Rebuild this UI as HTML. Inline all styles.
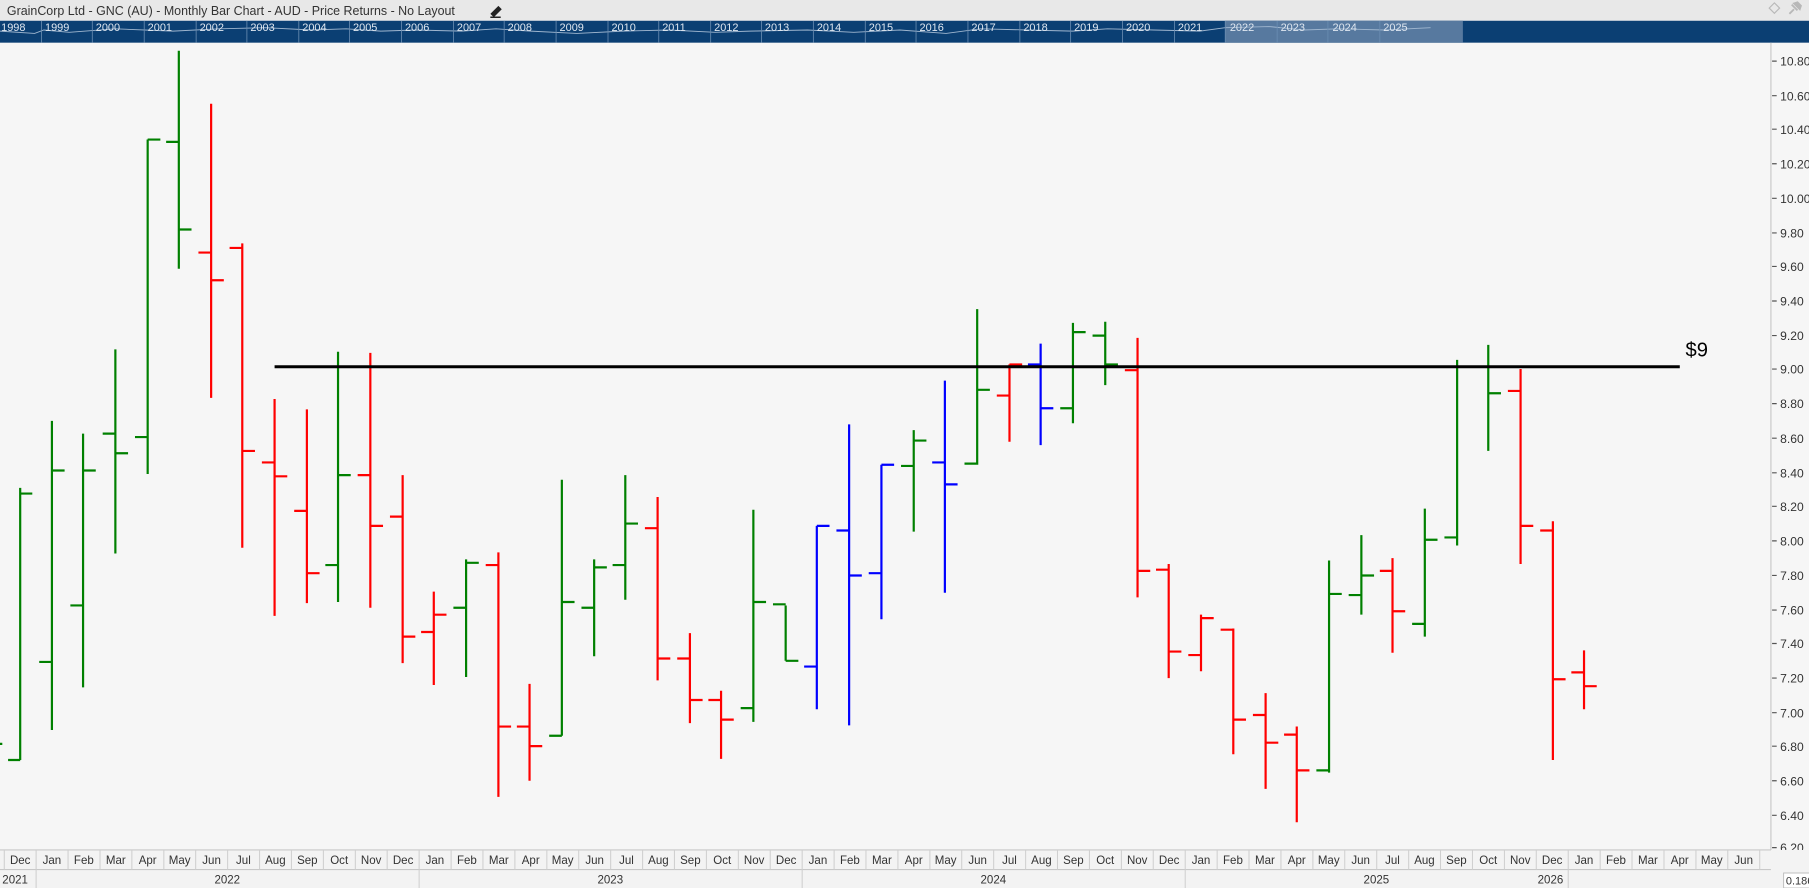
<!DOCTYPE html>
<html><head><meta charset="utf-8"><style>
html,body{margin:0;padding:0;background:#f6f6f6;overflow:hidden}
svg{display:block}
text{font-family:"Liberation Sans",sans-serif}
</style></head><body>
<svg width="1809" height="888" viewBox="0 0 1568 770" preserveAspectRatio="none" xmlns="http://www.w3.org/2000/svg">
<rect x="0" y="0" width="1568" height="770" fill="#f6f6f6"/>
<rect x="0" y="0" width="1568" height="18" fill="#e8e8e8"/>
<text x="6" y="13" font-size="10.8" fill="#333">GrainCorp Ltd - GNC (AU) - Monthly Bar Chart - AUD - Price Returns - No Layout</text>
<path d="M426,12 l6,-6 l2,2 l-6,6 z M425,15 h9" stroke="#222" stroke-width="1.3" fill="#222"/>
<path d="M1538,2.5 l4.5,4.5 l-4.5,4.5 l-4.5,-4.5 z" fill="none" stroke="#b8b8b8" stroke-width="1"/>
<path d="M1551,12 l4,-4 M1553,4 l5,5 M1555,3 l3,-1 l3,3 l-1,3 z" stroke="#b8b8b8" stroke-width="1.6" fill="#b8b8b8"/>
<rect x="0" y="18" width="1568" height="19" fill="#0b3f73"/>
<rect x="1062" y="18" width="206" height="19" fill="#57799f"/>
<polyline points="0,27 30,29 38,26 60,28 100,25 150,27 190,25 230,24 270,26 300,25 330,27 360,26 400,27 430,25 460,27 500,29 540,27 580,26 620,28 650,27 700,26 740,28 780,26 820,29 850,25 890,26 930,27 960,25 1000,26 1040,27 1062,24 1100,23 1130,26 1160,25 1200,26 1240,24" fill="none" stroke="#9fb6cf" stroke-width="0.8"/>
<g stroke="#6a8db2" stroke-width="0.7">
<path d="M36,18v19M80,18v19M125,18v19M170,18v19M214,18v19M259,18v19M303,18v19M348,18v19M393,18v19M437,18v19M482,18v19M527,18v19M571,18v19M616,18v19M660,18v19M705,18v19M750,18v19M794,18v19M839,18v19M884,18v19M928,18v19M973,18v19M1018,18v19M1062,18v19M1107,18v19M1151,18v19M1196,18v19"/>
</g>
<g font-size="9.5" fill="#dfe7f0">
<text x="1" y="27">1998</text><text x="39" y="27">1999</text><text x="83" y="27">2000</text><text x="128" y="27">2001</text><text x="173" y="27">2002</text><text x="217" y="27">2003</text><text x="262" y="27">2004</text><text x="306" y="27">2005</text><text x="351" y="27">2006</text><text x="396" y="27">2007</text><text x="440" y="27">2008</text><text x="485" y="27">2009</text><text x="530" y="27">2010</text><text x="574" y="27">2011</text><text x="619" y="27">2012</text><text x="663" y="27">2013</text><text x="708" y="27">2014</text><text x="753" y="27">2015</text><text x="797" y="27">2016</text><text x="842" y="27">2017</text><text x="887" y="27">2018</text><text x="931" y="27">2019</text><text x="976" y="27">2020</text><text x="1021" y="27">2021</text><text x="1066" y="27">2022</text><text x="1110" y="27">2023</text><text x="1155" y="27">2024</text><text x="1199" y="27">2025</text>
</g>
<line x1="1535" y1="37" x2="1535" y2="737" stroke="#c8c8c8" stroke-width="1"/>
<g font-size="10.5" fill="#333">
<text x="1543" y="57">10.80</text><text x="1543" y="87">10.60</text><text x="1543" y="116">10.40</text><text x="1543" y="146">10.20</text><text x="1543" y="176">10.00</text><text x="1543" y="206">9.80</text><text x="1543" y="235">9.60</text><text x="1543" y="265">9.40</text><text x="1543" y="295">9.20</text><text x="1543" y="324">9.00</text><text x="1543" y="354">8.80</text><text x="1543" y="384">8.60</text><text x="1543" y="414">8.40</text><text x="1543" y="443">8.20</text><text x="1543" y="473">8.00</text><text x="1543" y="503">7.80</text><text x="1543" y="533">7.60</text><text x="1543" y="562">7.40</text><text x="1543" y="592">7.20</text><text x="1543" y="622">7.00</text><text x="1543" y="651">6.80</text><text x="1543" y="681">6.60</text><text x="1543" y="711">6.40</text><text x="1543" y="739">6.20</text>
</g>
<g stroke="#555" stroke-width="1">
<path d="M1536,53h4M1536,83h4M1536,112h4M1536,142h4M1536,172h4M1536,202h4M1536,231h4M1536,261h4M1536,291h4M1536,320h4M1536,350h4M1536,380h4M1536,410h4M1536,439h4M1536,469h4M1536,499h4M1536,529h4M1536,558h4M1536,588h4M1536,618h4M1536,647h4M1536,677h4M1536,707h4M1536,735h4"/>
</g>
<g stroke-width="1.9" fill="none">
<path stroke="#008000" d="M0,645h2M17.5,423V659M7,659H17.5M17.5,428H28M45,365V633M34,574H45M45,408H56M72,376V596M61,525H72M72,408H83M100,303V480M89,376H100M100,393H111M128,121V411M117,379H128M128,121H139M155,44V233M144,123H155M155,199H166M293,305V522M282,490H293M293,412H304M404,485V587M393,527H404M404,488H415M487,416V638M476,638H487M487,522H498M515,485V569M504,527H515M515,492H526M542,412V520M531,490H542M542,454H553M653,442V626M642,614H653M653,522H664M681,525V573M670,524H681M681,573H692M792,373V461M781,404H792M792,382H803M847,268V403M836,402H847M847,338H858M930,280V367M919,354H930M930,288H941M958,279V334M947,291H958M958,316H969M1152,486V670M1141,668H1152M1152,515H1163M1180,464V533M1169,516H1180M1180,499H1191M1235,441V552M1224,541H1235M1235,468H1246M1263,312V473M1252,466H1263M1263,318H1274M1290,299V391M1279,318H1290M1290,341H1301"/>
<path stroke="#ff0000" d="M183,90V345M172,219H183M183,243H194M210,211V475M199,215H210M210,391H221M238,346V534M227,401H238M238,413H249M266,355V523M255,443H266M266,497H277M321,306V527M310,412H321M321,456H332M349,412V575M338,448H349M349,552H360M376,513V594M365,548H376M376,533H387M432,479V691M421,490H432M432,630H443M459,593V677M448,630H459M459,647H470M570,431V590M559,458H570M570,571H581M598,549V627M587,571H598M598,607H609M625,599V658M614,607H625M625,624H636M875,316V383M864,343H875M875,316H886M986,293V518M975,321H986M986,495H997M1013,489V588M1002,494H1013M1013,565H1024M1041,533V582M1030,568H1041M1041,536H1052M1069,545V654M1058,546H1069M1069,624H1080M1097,601V684M1086,620H1097M1097,644H1108M1124,630V713M1113,637H1124M1124,668H1135M1207,484V566M1196,495H1207M1207,530H1218M1318,320V489M1307,339H1318M1318,456H1329M1346,452V659M1335,460H1346M1346,589H1357M1373,564V615M1362,583H1373M1373,595H1384"/>
<path stroke="#0000ff" d="M708,456V615M697,578H708M708,456H719M736,368V629M725,460H736M736,499H747M764,403V537M753,497H764M764,403H775M819,330V514M808,401H819M819,420H830M902,298V386M891,316H902M902,354H913"/>
</g>
<line x1="238" y1="318" x2="1456" y2="318" stroke="#000" stroke-width="2.6"/>
<text x="1461" y="309" font-size="17.5" fill="#000">$9</text>
<rect x="0" y="737" width="1568" height="33" fill="#f3f3f3"/>
<line x1="0" y1="737" x2="1535" y2="737" stroke="#c8c8c8" stroke-width="1"/>
<line x1="0" y1="754" x2="1535" y2="754" stroke="#c8c8c8" stroke-width="1"/>
<g stroke="#cfcfcf" stroke-width="0.9">
<path d="M3.7,737v17M31.3,737v17M59,737v17M86.7,737v17M114.3,737v17M142,737v17M169.6,737v17M197.3,737v17M225,737v17M252.6,737v17M280.3,737v17M308,737v17M335.6,737v17M363.3,737v17M391,737v17M418.6,737v17M446.3,737v17M474,737v17M501.6,737v17M529.3,737v17M557,737v17M584.6,737v17M612.3,737v17M640,737v17M667.6,737v17M695.3,737v17M723,737v17M750.6,737v17M778.3,737v17M806,737v17M833.6,737v17M861.3,737v17M889,737v17M916.6,737v17M944.3,737v17M972,737v17M999.6,737v17M1027.3,737v17M1055,737v17M1082.6,737v17M1110.3,737v17M1138,737v17M1165.6,737v17M1193.3,737v17M1221,737v17M1248.6,737v17M1276.3,737v17M1304,737v17M1331.6,737v17M1359.3,737v17M1387,737v17M1414.6,737v17M1442.3,737v17M1470,737v17M1497.6,737v17M1525.3,737v17"/>
<path d="M31.3,754v16M363.3,754v16M695.3,754v16M1027.3,754v16M1359.3,754v16"/>
</g>
<g font-size="10" fill="#333" text-anchor="middle">
<text x="17.5" y="749">Dec</text><text x="45" y="749">Jan</text><text x="72.7" y="749">Feb</text><text x="100.4" y="749">Mar</text><text x="128" y="749">Apr</text><text x="155.7" y="749">May</text><text x="183.4" y="749">Jun</text><text x="211" y="749">Jul</text><text x="238.7" y="749">Aug</text><text x="266.4" y="749">Sep</text><text x="294" y="749">Oct</text><text x="321.7" y="749">Nov</text><text x="349.4" y="749">Dec</text><text x="377" y="749">Jan</text><text x="404.7" y="749">Feb</text><text x="432.4" y="749">Mar</text><text x="460" y="749">Apr</text><text x="487.7" y="749">May</text><text x="515.4" y="749">Jun</text><text x="543" y="749">Jul</text><text x="570.7" y="749">Aug</text><text x="598.4" y="749">Sep</text><text x="626" y="749">Oct</text><text x="653.7" y="749">Nov</text><text x="681.4" y="749">Dec</text><text x="709" y="749">Jan</text><text x="736.7" y="749">Feb</text><text x="764.4" y="749">Mar</text><text x="792" y="749">Apr</text><text x="819.7" y="749">May</text><text x="847.4" y="749">Jun</text><text x="875" y="749">Jul</text><text x="902.7" y="749">Aug</text><text x="930.4" y="749">Sep</text><text x="958" y="749">Oct</text><text x="985.7" y="749">Nov</text><text x="1013.4" y="749">Dec</text><text x="1041" y="749">Jan</text><text x="1068.7" y="749">Feb</text><text x="1096.4" y="749">Mar</text><text x="1124" y="749">Apr</text><text x="1151.7" y="749">May</text><text x="1179.4" y="749">Jun</text><text x="1207" y="749">Jul</text><text x="1234.7" y="749">Aug</text><text x="1262.4" y="749">Sep</text><text x="1290" y="749">Oct</text><text x="1317.7" y="749">Nov</text><text x="1345.4" y="749">Dec</text><text x="1373" y="749">Jan</text><text x="1400.7" y="749">Feb</text><text x="1428.4" y="749">Mar</text><text x="1456" y="749">Apr</text><text x="1483.7" y="749">May</text><text x="1511.4" y="749">Jun</text>
<text x="197" y="766">2022</text><text x="529" y="766">2023</text><text x="861" y="766">2024</text><text x="1193" y="766">2025</text>
</g>
<text x="2" y="766" font-size="10" fill="#333">2021</text>
<text x="1355" y="766" font-size="10" fill="#333" text-anchor="end">2026</text>
<rect x="1546" y="757" width="24" height="13" fill="#fff" stroke="#bbb" stroke-width="0.8"/>
<text x="1548" y="767" font-size="9.5" fill="#333">0.186</text>
</svg>
</body></html>
